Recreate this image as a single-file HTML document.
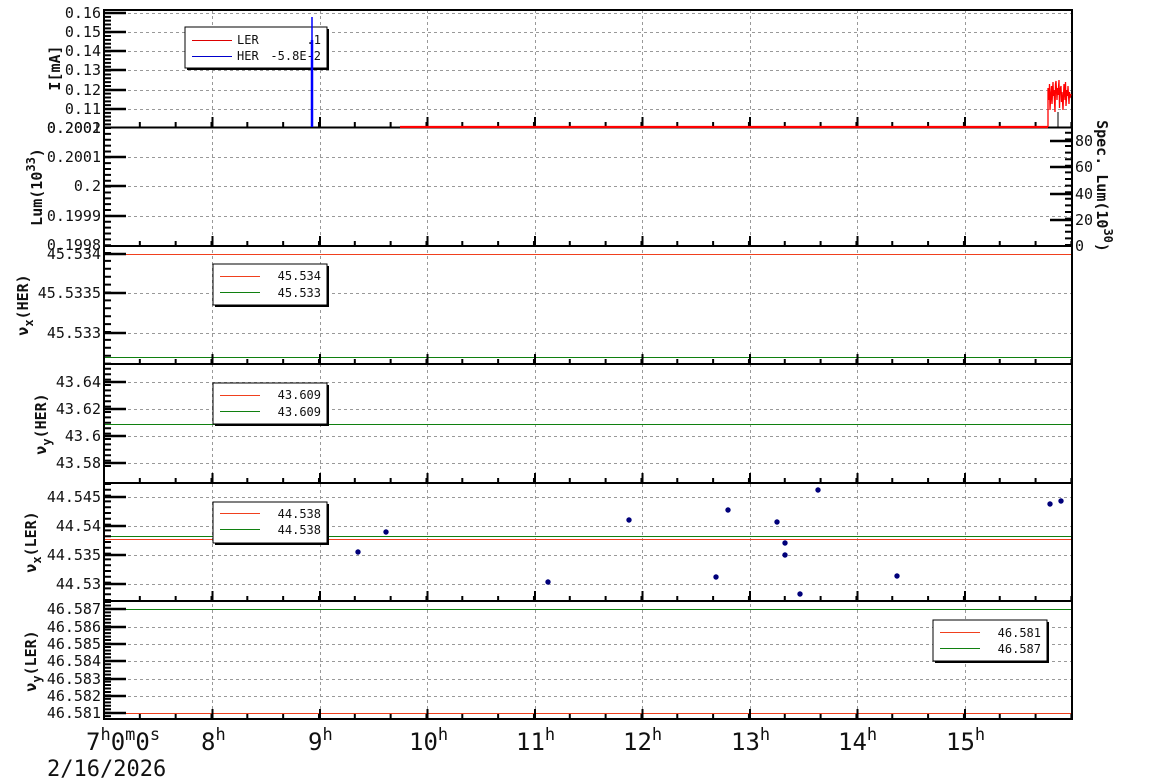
<!DOCTYPE html>
<html><head><meta charset="utf-8"><style>
html,body{margin:0;padding:0;background:#fff;}
svg{display:block;}
.t{font-family:"DejaVu Sans Mono","Liberation Mono",monospace;font-size:15px;fill:#111;}
.yl{font-family:"DejaVu Sans Mono","Liberation Mono",monospace;font-size:15px;font-weight:bold;fill:#111;}
.lg{font-family:"DejaVu Sans Mono","Liberation Mono",monospace;font-size:12px;fill:#111;}
.xl{font-family:"DejaVu Sans Mono","Liberation Mono",monospace;font-size:24px;fill:#111;}
.g{stroke:#999;stroke-width:1;stroke-dasharray:3 3;fill:none;}
</style></head><body>
<svg width="1154" height="782" viewBox="0 0 1154 782" xmlns="http://www.w3.org/2000/svg">
<path class="g" d="M212.5 10V719M320.5 10V719M427.5 10V719M535.5 10V719M642.5 10V719M750.5 10V719M857.5 10V719M965.5 10V719"/>
<path class="g" d="M104 13.5H1072M104 32.5H1072M104 51.5H1072M104 70.5H1072M104 90.5H1072M104 109.5H1072
M104 157.5H1072M104 186.5H1072M104 216.5H1072
M104 293.5H1072M104 333.5H1072
M104 382.5H1072M104 409.5H1072M104 436.5H1072M104 463.5H1072
M104 497.5H1072M104 526.5H1072M104 555.5H1072M104 584.5H1072
M104 627.5H1072M104 644.5H1072M104 661.5H1072M104 679.5H1072M104 696.5H1072"/>

<path d="M104 254.5H1072" stroke="#f0401e" stroke-width="1"/>
<path d="M104 357.5H1072" stroke="#108010" stroke-width="1"/>
<path d="M104 424.5H1072" stroke="#108010" stroke-width="1"/>
<path d="M104 536.5H1072" stroke="#108010" stroke-width="1"/>
<path d="M104 539.5H1072" stroke="#f0401e" stroke-width="1"/>
<g fill="#00007a">
<circle cx="358" cy="552" r="2.7"/><circle cx="386" cy="532" r="2.7"/><circle cx="548" cy="582" r="2.7"/>
<circle cx="629" cy="520" r="2.7"/><circle cx="716" cy="577" r="2.7"/><circle cx="728" cy="510" r="2.7"/>
<circle cx="777" cy="522" r="2.7"/><circle cx="785" cy="543" r="2.7"/><circle cx="785" cy="555" r="2.7"/>
<circle cx="800" cy="594" r="2.7"/><circle cx="818" cy="490" r="2.7"/><circle cx="897" cy="576" r="2.7"/>
<circle cx="1050" cy="504" r="2.7"/><circle cx="1061" cy="501" r="2.7"/>
</g>
<path d="M104 609.5H1072" stroke="#108010" stroke-width="1"/>
<path d="M104 713.5H1072" stroke="#f0401e" stroke-width="1"/>

<g stroke="#000" stroke-width="2">
<path d="M212.5 127v-10M320 127v-10M427.5 127v-10M535 127v-10M642.5 127v-10M750 127v-10M857.5 127v-10M965 127v-10"/>
<path d="M212.5 246v-10M320 246v-10M427.5 246v-10M535 246v-10M642.5 246v-10M750 246v-10M857.5 246v-10M965 246v-10"/>
<path d="M212.5 364v-10M320 364v-10M427.5 364v-10M535 364v-10M642.5 364v-10M750 364v-10M857.5 364v-10M965 364v-10"/>
<path d="M212.5 483v-10M320 483v-10M427.5 483v-10M535 483v-10M642.5 483v-10M750 483v-10M857.5 483v-10M965 483v-10"/>
<path d="M212.5 601v-10M320 601v-10M427.5 601v-10M535 601v-10M642.5 601v-10M750 601v-10M857.5 601v-10M965 601v-10"/>
<path d="M212.5 719v-10M320 719v-10M427.5 719v-10M535 719v-10M642.5 719v-10M750 719v-10M857.5 719v-10M965 719v-10"/>
</g>
<g stroke="#000" stroke-width="5" stroke-dasharray="2 33.83" stroke-dashoffset="-34.83">
<path d="M104 124.5H1072M104 243.5H1072M104 361.5H1072M104 480.5H1072M104 598.5H1072M104 716.5H1072"/>
</g>

<g stroke="#000" stroke-width="2.5">
<path d="M104 13h22M104 32h22M104 51h22M104 70h22M104 90h22M104 109h22"/>
<path d="M104 157h22M104 186h22M104 216h22"/>
<path d="M104 254h22M104 293h22M104 333h22"/>
<path d="M104 382h22M104 409h22M104 436h22M104 463h22"/>
<path d="M104 497h22M104 526h22M104 555h22M104 584h22"/>
<path d="M104 609h22M104 627h22M104 644h22M104 661h22M104 679h22M104 696h22M104 713h22"/>
<path d="M1072 141h-22M1072 167h-22M1072 194h-22M1072 220h-22"/>
</g>
<g stroke="#000" stroke-width="7" fill="none">
<path d="M107.5 12V127" stroke-dasharray="2 1.84"/>
<path d="M107.5 127V246" stroke-dasharray="2 3.86"/>
<path d="M107.5 252V364" stroke-dasharray="2 5.9"/>
<path d="M107.5 467V364" stroke-dasharray="2 3.4"/>
<path d="M107.5 483V601" stroke-dasharray="2 3.8"/>
<path d="M107.5 601V719" stroke-dasharray="2 1.46"/>
<path d="M1068.5 246V128" stroke-dasharray="2 4.6"/>
</g>

<g fill="none" stroke="#000" stroke-width="2">
<rect x="104" y="10" width="968" height="709"/>
<path d="M104 127.5H1072M104 246H1072M104 364H1072M104 483H1072M104 601H1072"/>
</g>

<!-- panel 1 data on top of frame -->
<path d="M400 127H1048" stroke="#f00" stroke-width="2.2" fill="none"/>
<polyline fill="none" stroke="#f00" stroke-width="1.3" points="1048,127 1048,88 1049,100 1049.5,84 1050,110 1051,92 1051.5,86 1052,104 1053,82 1053.5,96 1054,90 1055,112 1055.5,84 1056,81 1057,100 1057.5,88 1058,95 1059,80 1059.5,108 1060,90 1061,86 1061.5,102 1062,92 1063,110 1063.5,95 1064,84 1065,100 1065.5,82 1066,106 1067,90 1067.5,96 1068,86 1069,104 1069.5,92 1070,98 1071,94"/>
<path d="M1058 112V127" stroke="#000" stroke-width="1"/>

<g>
<rect x="187" y="29" width="142" height="41" fill="#000"/>
<rect x="185" y="27" width="142" height="41" fill="#fff" stroke="#000" stroke-width="1"/>
<path d="M192 40.5H232" stroke="#d00" stroke-width="1"/><path d="M192 56.5H232" stroke="#00c" stroke-width="1"/>
<text class="lg" x="237" y="44">LER</text><text class="lg" x="321" y="44" text-anchor="end">.1</text>
<text class="lg" x="237" y="60">HER</text><text class="lg" x="321" y="60" text-anchor="end">-5.8E-2</text>
<path d="M312 17V127" stroke="#00f" stroke-width="1.5"/>
<path d="M312 40V127" stroke="#00f" stroke-width="2.5"/>
</g>
<g>
<rect x="215" y="266" width="114" height="41" fill="#000"/>
<rect x="213" y="264" width="114" height="41" fill="#fff" stroke="#000"/>
<path d="M220 276.5H260" stroke="#f0401e"/><path d="M220 292.5H260" stroke="#108010"/>
<text class="lg" x="321" y="280" text-anchor="end">45.534</text><text class="lg" x="321" y="297" text-anchor="end">45.533</text>
</g>
<g>
<rect x="215" y="385" width="114" height="41" fill="#000"/>
<rect x="213" y="383" width="114" height="41" fill="#fff" stroke="#000"/>
<path d="M220 395.5H260" stroke="#f0401e"/><path d="M220 411.5H260" stroke="#108010"/>
<text class="lg" x="321" y="399" text-anchor="end">43.609</text><text class="lg" x="321" y="416" text-anchor="end">43.609</text>
</g>
<g>
<rect x="215" y="504" width="114" height="41" fill="#000"/>
<rect x="213" y="502" width="114" height="41" fill="#fff" stroke="#000"/>
<path d="M220 513.5H260" stroke="#f0401e"/><path d="M220 529.5H260" stroke="#108010"/>
<text class="lg" x="321" y="518" text-anchor="end">44.538</text><text class="lg" x="321" y="534" text-anchor="end">44.538</text>
</g>
<g>
<rect x="935" y="622" width="114" height="41" fill="#000"/>
<rect x="933" y="620" width="114" height="41" fill="#fff" stroke="#000"/>
<path d="M940 632.5H980" stroke="#f0401e"/><path d="M940 648.5H980" stroke="#108010"/>
<text class="lg" x="1041" y="637" text-anchor="end">46.581</text><text class="lg" x="1041" y="653" text-anchor="end">46.587</text>
</g>

<g class="t" text-anchor="end">
<text x="101" y="18">0.16</text><text x="101" y="37">0.15</text><text x="101" y="56">0.14</text>
<text x="101" y="75">0.13</text><text x="101" y="95">0.12</text><text x="101" y="114">0.11</text>
<text x="101" y="133">0.2002</text><text x="101" y="133">0.2001</text>
<text x="101" y="162">0.2001</text><text x="101" y="191">0.2</text><text x="101" y="221">0.1999</text><text x="101" y="250">0.1998</text>
<text x="101" y="259">45.534</text><text x="101" y="298">45.5335</text><text x="101" y="338">45.533</text>
<text x="101" y="387">43.64</text><text x="101" y="414">43.62</text><text x="101" y="441">43.6</text><text x="101" y="468">43.58</text>
<text x="101" y="502">44.545</text><text x="101" y="531">44.54</text><text x="101" y="560">44.535</text><text x="101" y="589">44.53</text>
<text x="101" y="614">46.587</text><text x="101" y="632">46.586</text><text x="101" y="649">46.585</text>
<text x="101" y="666">46.584</text><text x="101" y="684">46.583</text><text x="101" y="701">46.582</text><text x="101" y="718">46.581</text>
</g>
<g class="t">
<text x="1075" y="146">80</text><text x="1075" y="172">60</text><text x="1075" y="199">40</text>
<text x="1075" y="225">20</text><text x="1075" y="251">0</text>
</g>

<text class="yl" transform="translate(60,68) rotate(-90)" text-anchor="middle">I[mA]</text>
<text class="yl" transform="translate(42,187) rotate(-90)" text-anchor="middle">Lum(10<tspan dy="-7" font-size="12">33</tspan><tspan dy="7">)</tspan></text>
<text class="yl" transform="translate(28,305) rotate(-90)" text-anchor="middle">ν<tspan dy="5" font-size="12">x</tspan><tspan dy="-5">(HER)</tspan></text>
<text class="yl" transform="translate(46,424) rotate(-90)" text-anchor="middle">ν<tspan dy="5" font-size="12">y</tspan><tspan dy="-5">(HER)</tspan></text>
<text class="yl" transform="translate(36,542) rotate(-90)" text-anchor="middle">ν<tspan dy="5" font-size="12">x</tspan><tspan dy="-5">(LER)</tspan></text>
<text class="yl" transform="translate(36,661) rotate(-90)" text-anchor="middle">ν<tspan dy="5" font-size="12">y</tspan><tspan dy="-5">(LER)</tspan></text>
<text class="yl" transform="translate(1097,186) rotate(90)" text-anchor="middle">Spec. Lum(10<tspan dy="-7" font-size="12">30</tspan><tspan dy="7">)</tspan></text>

<g class="xl">
<text x="86" y="750">7<tspan dy="-10" font-size="17">h</tspan><tspan dy="10">0</tspan><tspan dy="-10" font-size="17">m</tspan><tspan dy="10">0</tspan><tspan dy="-10" font-size="17">s</tspan></text>
<text x="201" y="750">8<tspan dy="-10" font-size="17">h</tspan></text>
<text x="308" y="750">9<tspan dy="-10" font-size="17">h</tspan></text>
<text x="409" y="750">10<tspan dy="-10" font-size="17">h</tspan></text>
<text x="516" y="750">11<tspan dy="-10" font-size="17">h</tspan></text>
<text x="623" y="750">12<tspan dy="-10" font-size="17">h</tspan></text>
<text x="731" y="750">13<tspan dy="-10" font-size="17">h</tspan></text>
<text x="838" y="750">14<tspan dy="-10" font-size="17">h</tspan></text>
<text x="946" y="750">15<tspan dy="-10" font-size="17">h</tspan></text>
<text x="47" y="776" font-size="22">2/16/2026</text>
</g>
</svg>
</body></html>
